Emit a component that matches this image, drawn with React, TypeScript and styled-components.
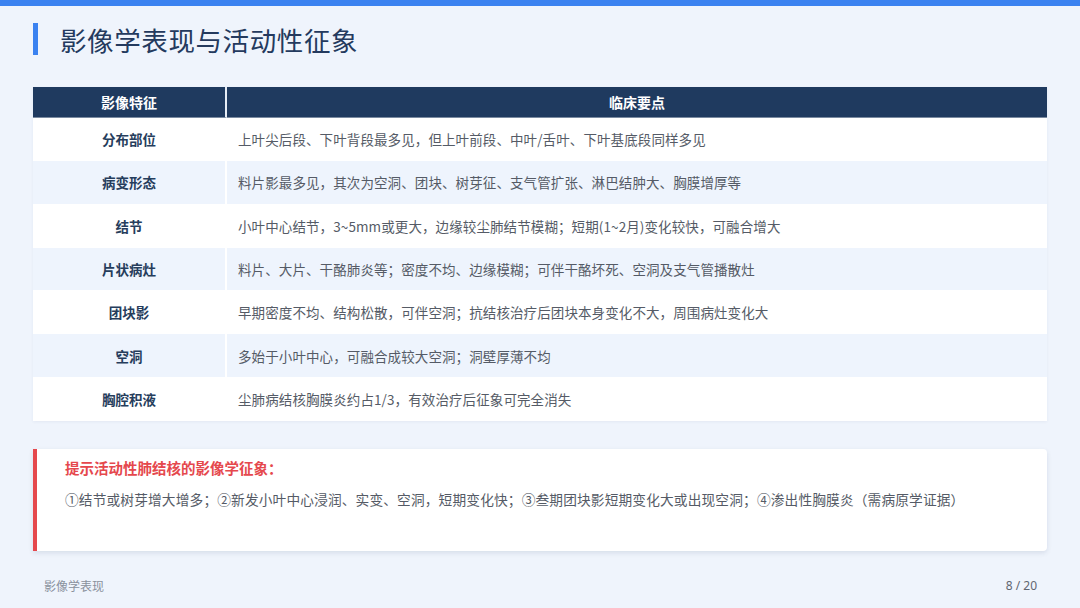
import React from "react";
import styled, { createGlobalStyle } from "styled-components";

const Global = createGlobalStyle`
  html, body { margin: 0; padding: 0; }
  body {
    width: 1080px; height: 608px; overflow: hidden;
    background: #eff4fc;
    font-family: "Noto Sans CJK SC", "Noto Sans", sans-serif;
  }
`;

const Page = styled.div`
  width: 1080px;
  height: 608px;
  display: flex;
  flex-direction: column;
  background: #eff4fc;
`;

const TopBar = styled.div`
  height: 6px;
  background: #3b82f0;
`;

const Content = styled.div`
  flex: 1;
  display: flex;
  flex-direction: column;
  padding: 0 33px;
`;

const TitleRow = styled.div`
  display: flex;
  align-items: center;
  gap: 22px;
  height: 32px;
  margin-top: 17px;
`;

const Accent = styled.div`
  width: 5px;
  height: 32px;
  background: #3b82f0;
`;

const Title = styled.h1`
  margin: 0;
  font-size: 26.5px;
  font-weight: 400;
  color: #243a5e;
  letter-spacing: 0.6px;
`;

const Table = styled.div`
  margin-top: 32px;
  display: grid;
  grid-template-columns: 194px 1fr;
  background: #ffffff;
  box-shadow: 0 1px 3px rgba(30, 58, 95, 0.06);
`;

const HeadCell = styled.div<{ $first?: boolean }>`
  height: 30px;
  display: flex;
  align-items: center;
  justify-content: center;
  background: #1f3a5f;
  color: #ffffff;
  font-size: 14px;
  font-weight: 700;
  border-right: ${(p) => (p.$first ? "2px solid #e6ecf5" : "none")};
  border-bottom: 1px solid #7a8aa0;
`;

const Cell = styled.div<{ $alt: boolean; $label?: boolean }>`
  height: 43.3px;
  box-sizing: border-box;
  display: flex;
  align-items: center;
  justify-content: ${(p) => (p.$label ? "center" : "flex-start")};
  padding: ${(p) => (p.$label ? "0" : "0 0 0 11px")};
  background: ${(p) => (p.$alt ? "#eef4fd" : "#ffffff")};
  border-right: ${(p) => (p.$label ? "2px solid #ffffff" : "none")};
  border-bottom: 1px solid #ffffff;
  font-size: 13.5px;
  font-weight: ${(p) => (p.$label ? 700 : 400)};
  color: ${(p) => (p.$label ? "#263d5c" : "#555b66")};
  letter-spacing: ${(p) => (p.$label ? "0" : "0.1px")};
  white-space: nowrap;
`;

const Callout = styled.div`
  margin-top: 28px;
  height: 102px;
  box-sizing: border-box;
  background: #ffffff;
  border-left: 4px solid #e5484d;
  border-radius: 0 4px 4px 0;
  box-shadow: 0 2px 5px rgba(30, 58, 95, 0.12);
  padding: 9px 0 0 28px;
  display: flex;
  flex-direction: column;
  gap: 11px;
`;

const CalloutTitle = styled.div`
  color: #e5484d;
  font-size: 14.5px;
  font-weight: 700;
  line-height: 20px;
`;

const CalloutBody = styled.div`
  color: #555b66;
  font-size: 13.7px;
  line-height: 20px;
  letter-spacing: 0.15px;
  white-space: nowrap;
`;

const Footer = styled.div`
  height: 46px;
  display: flex;
  align-items: center;
  justify-content: space-between;
  padding: 0 43px 0 44px;
  font-size: 12px;
  color: #8a919c;
`;

const PageNum = styled.span`
  color: #5f6670;
  font-family: "Noto Sans", "Liberation Sans", sans-serif;
`;

const rows: [string, string][] = [
  ["分布部位", "上叶尖后段、下叶背段最多见，但上叶前段、中叶/舌叶、下叶基底段同样多见"],
  ["病变形态", "料片影最多见，其次为空洞、团块、树芽征、支气管扩张、淋巴结肿大、胸膜增厚等"],
  ["结节", "小叶中心结节，3~5mm或更大，边缘较尘肺结节模糊；短期(1~2月)变化较快，可融合增大"],
  ["片状病灶", "料片、大片、干酪肺炎等；密度不均、边缘模糊；可伴干酪坏死、空洞及支气管播散灶"],
  ["团块影", "早期密度不均、结构松散，可伴空洞；抗结核治疗后团块本身变化不大，周围病灶变化大"],
  ["空洞", "多始于小叶中心，可融合成较大空洞；洞壁厚薄不均"],
  ["胸腔积液", "尘肺病结核胸膜炎约占1/3，有效治疗后征象可完全消失"],
];

export default function App() {
  return (
    <>
      <Global />
      <Page>
        <TopBar />
        <Content>
          <TitleRow>
            <Accent />
            <Title>影像学表现与活动性征象</Title>
          </TitleRow>
          <Table>
            <HeadCell $first>影像特征</HeadCell>
            <HeadCell>临床要点</HeadCell>
            {rows.map(([k, v], i) => (
              <React.Fragment key={k}>
                <Cell $alt={i % 2 === 1} $label>
                  {k}
                </Cell>
                <Cell $alt={i % 2 === 1}>{v}</Cell>
              </React.Fragment>
            ))}
          </Table>
          <Callout>
            <CalloutTitle>提示活动性肺结核的影像学征象：</CalloutTitle>
            <CalloutBody>
              ①结节或树芽增大增多；②新发小叶中心浸润、实变、空洞，短期变化快；③叁期团块影短期变化大或出现空洞；④渗出性胸膜炎（需病原学证据）
            </CalloutBody>
          </Callout>
        </Content>
        <Footer>
          <span>影像学表现</span>
          <PageNum>8 / 20</PageNum>
        </Footer>
      </Page>
    </>
  );
}
